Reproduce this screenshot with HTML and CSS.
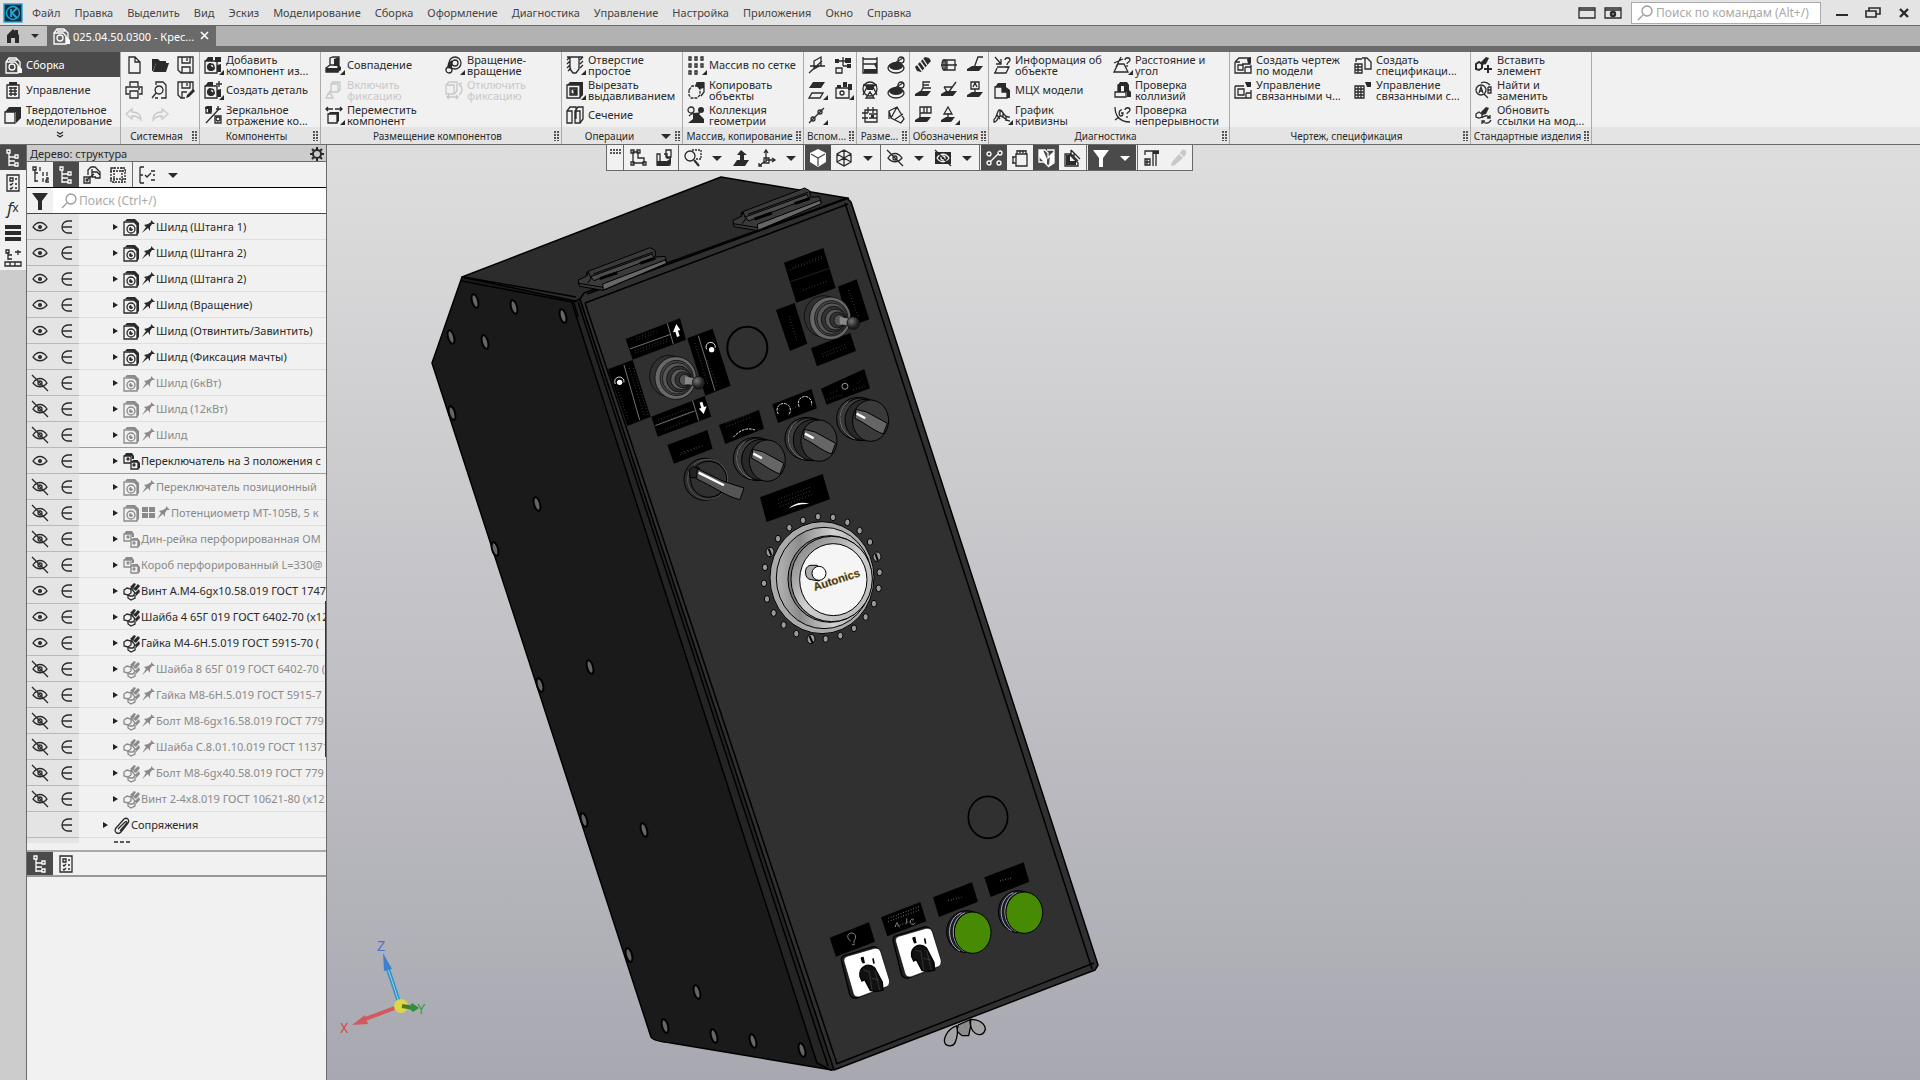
FILE: index.html
```html
<!DOCTYPE html>
<html lang="ru">
<head>
    <meta charset="UTF-8">
    <meta name="viewport" content="width=device-width, initial-scale=1.0">
    <title>025.04.50.0300 - Крес...</title>
    <link rel="stylesheet" href="styles.css">
</head>
<body>
    <!-- Shared icons, 18x18 -->
    <svg class="defs" aria-hidden="true">
        <defs>
            <path id="tri" class="f" d="M20 14v5h-5z"/>
            <g id="asm"><path d="M2 6l3-4h7l4 4v8M2 6h9l3 3v8H2zM5 4h8"/><circle cx="8" cy="11" r="3"/><path class="f" d="M14 9l4 4v4h-4z"/></g>
            <g id="sheet"><path d="M3 4h12v13H3z"/><path class="f" d="M5 1h8v3H5z"/><path d="M5 7h8M5 10h8M5 13h8M7 6v9M11 6v9"/></g>
            <g id="solid"><path d="M1 6h10v11H1z"/><path class="f" d="M1 6l4-5h12v11l-5 5V6z"/></g>
            <path id="new" d="M4 1h6l5 5v11H4zM10 1v5h5"/>
            <g id="open"><path class="f" d="M1 3h6l2 2h6v2H5l-3 8H1z"/><path class="f" d="M5 7h13l-3 9H2z"/></g>
            <path id="save" d="M1 1h15v16H4l-3-3zM5 1v6h8V1M10 2v3M5 17v-6h8v6"/>
            <path id="print" d="M5 5V1h8v4M4 13H1V6h16v7h-3M5 10h8v7H5zM13 8h2"/>
            <path id="preview" d="M5 4V1h7l3 3v13h-5M7 17H4M8 5a4 4 0 1 0 .1 0M5 12l-4 5"/>
            <g id="saveas"><path d="M8 17H4l-3-3V1h15v8M5 1v6h8V1M10 2v3M5 17v-6h5"/><path class="f" d="M10 14l6-6 2 2-6 6-3 1z"/></g>
            <path id="undo" d="M1 8l6-5v3c6 0 9 3 9 8-2-3-5-4-9-4v3z"/>
            <path id="redo" d="M17 8l-6-5v3c-6 0-9 3-9 8 2-3 5-4 9-4v3z"/>
            <g id="addpart"><path d="M1 5h12v12H1z"/><path class="f" d="M1 5l3-4h5v4zM11 1h6v5h-6zM13 9l4-1v8h-4z"/><circle cx="7" cy="11" r="3"/><path class="f" d="M7 7a4 4 0 1 0 4 4 3 3 0 0 1-4-4z"/><use href="#tri"/></g>
            <g id="mkpart"><path d="M1 5h12v12H1zM15 0v6M12 3h6"/><path class="f" d="M1 5l3-4h5v4zM13 9l4-1v8h-4z"/><circle cx="7" cy="11" r="3"/><path class="f" d="M7 7a4 4 0 1 0 4 4 3 3 0 0 1-4-4z"/><use href="#tri"/></g>
            <g id="mirror"><path d="M2 2h5v5H2zM2 17L15 3M11 10h6v7h-6zM14 0v5M12 3h5"/><path class="f" d="M1 1l2-1h5v5l-1 2H4V3H1z"/><circle cx="14" cy="13" r="2"/></g>
            <g id="mate"><path d="M5 9V2l3-1h6v9M1 16v-4l4-3h8v7z"/><path class="f" d="M9 3l5-2v9H9zM1 12h12v4H1z"/><path class="f" d="M13 9l3 2v3l-3 2z"/><use href="#tri"/></g>
            <g id="fixon"><path d="M6 3l2-2h7v8l-2 2H6zM6 3h7v8M6 9l-3 4M1 17l2-4h3l2 4z"/></g>
            <g id="move"><path d="M1 3h7M10 3h7M3 1L1 3l2 2M15 1l2 2-2 2M3 8h9v9H3z"/><path class="f" d="M3 8l2-2h9v9l-2 2V8z"/><use href="#tri"/></g>
            <g id="rot"><circle cx="10" cy="7" r="6"/><circle cx="10" cy="7" r="3"/><circle cx="4" cy="14" r="3"/><path class="f" d="M3 7l4-3v9l-5-1z"/><use href="#tri"/></g>
            <g id="fixoff"><path d="M1 4l3-3h8v9l-3 3H1zM1 4h8v9M14 3c4 3 4 8 0 11M17 2l-3 1 2 3M2 16h11M4 14l-2 2 2 2M11 14l2 2-2 2"/></g>
            <g id="hole"><path d="M4 1v12l3 4h3l3-4V1M1 1h16M1 4l3-3M1 8l3-3M1 12l3-3M2 15l3-3M14 4l3-3M14 8l3-3M14 12l3-3"/><use href="#tri"/></g>
            <g id="cut"><path d="M1 4h13v13H1zM5 8h5v5H5z"/><path class="f" d="M1 4l3-3h13v13l-3 3V4zM7 9h4v4H8z"/><path d="M4 7h7v7H4z"/><use href="#tri"/></g>
            <g id="section"><path d="M1 5l3-4h6v12M1 5h5v12H1zM9 5l3-4h5v12l-3 4M9 5h5v12H9z"/></g>
            <g id="grid"><path d="M2 1h2v3H2zM8 1h2v3H8zM14 1h2v3h-2zM2 8h2v3H2zM8 8h2v3H8zM14 8h2v3h-2zM2 15h2v3H2zM8 15h2v3H8z"/><use href="#tri"/></g>
            <g id="copy"><path d="M9 2h8v9l-3 4" /><path class="f" d="M8 4l3-3h6v6l-4 1z"/><path stroke-dasharray="3 1" d="M2 9l3-4h5l3 3v6l-3 3H4l-2-3z"/></g>
            <g id="collect"><circle cx="4" cy="4" r="3"/><circle class="f" cx="14" cy="4" r="3"/><path class="f" d="M6 8h6l5 5v4H1l5-4z"/><path d="M2 10c3-4 7-2 11-3"/></g>
            <path id="plane" d="M6 5l7-4v8l-7 4zM1 17L14 5M2 10h15M6 13V5"/>
            <g id="tree3"><path d="M9 1v9M4 5h10M9 10h7M2 12h6v5H2z"/><path class="f" d="M1 3h4v4H1zM11 2h6v5h-6zM13 8h4v4h-4z"/></g>
            <g id="planes"><path class="f" d="M5 1h12l-4 6H1z"/><path d="M4 12h11l-3 5H1z"/><use href="#tri"/></g>
            <g id="cam"><path d="M2 7h13v10H2z"/><circle cx="8" cy="12" r="2"/><path class="f" d="M9 1h4v5H9zM14 3h4v6h-4zM3 4h4v3H3z"/><use href="#tri"/></g>
            <g id="axis"><path d="M1 17L16 2"/><circle cx="5" cy="13" r="2"/><circle cx="12" cy="6" r="2"/><use href="#tri"/></g>
            <g id="dimlin"><path d="M2 1v16M16 1v8M2 3h14M2 8h14v9H2z"/><path class="f" d="M3 13h13v4H3zM13 8l3-2v8z"/></g>
            <g id="dimdia"><ellipse cx="9" cy="12" rx="8" ry="5"/><ellipse class="f" cx="9" cy="10" rx="7" ry="4"/><path d="M6 8l10-6"/><circle cx="14" cy="4" r="3"/></g>
            <g id="dimang"><path d="M2 14L7 4h4l5 10M2 4h14M5 17l4-6 4 6z"/><circle cx="9" cy="8" r="7"/><path class="f" d="M4 4h10l-2 5H6z"/></g>
            <g id="dimgrid"><path d="M4 4h12v12H4zM7 1v6M12 1v6M1 7h6M1 12h6M8 8h8M8 12h8"/><path class="f" d="M10 9h3v3h-3z"/></g>
            <g id="dimfree"><path d="M2 5l8-4 7 12-3 4L4 12zM2 5v8M10 1L4 12M7 14l9-6"/></g>
            <g id="thread"><path class="f" d="M1 11L11 1l4 1 2 3L7 16l-4-1z"/><path stroke="#f1f1f1" d="M6 5l5 7M9 3l4 6M3 8l5 7"/></g>
            <g id="axle"><path d="M1 9h16M4 4h3v10H4zM7 4h8v10H7z"/><ellipse cx="4" cy="9" rx="2" ry="5"/></g>
            <g id="base1"><path class="f" d="M1 13l5-3h11l-4 5H1z"/><path d="M8 12L12 1h5"/></g>
            <g id="base2"><path class="f" d="M1 13l5-3h11l-4 5H1z"/><path d="M6 12l3-5h8M9 7V1h7M9 4h6"/></g>
            <g id="base3"><path class="f" d="M1 13l5-3h11l-4 5H1z"/><path d="M4 6l4 6 8-11M4 6h8"/></g>
            <g id="base4"><path class="f" d="M1 14l5-3h11l-4 5H1z"/><path d="M9 12V8M5 1h8v7H5zM7 6l2-4 2 4"/></g>
            <g id="base5"><path class="f" d="M1 14l5-3h11l-4 5H1z"/><path d="M6 12V1h11v6H6M10 1v6M13 1v6"/></g>
            <g id="base6"><path class="f" d="M1 14l5-3h9l-4 5H1z"/><path d="M8 12V7M8 1l-4 7h8z"/><use href="#tri"/></g>
            <g id="info"><path d="M2 1l6 7M8 3v5H3M4 11h12l-3 6H1M2 17l2-5M12 4c0-3 5-3 5 0 0 2-3 2-3 5M14 10v2"/></g>
            <g id="mass"><path d="M2 6h7v5h5v6H2z"/><path class="f" d="M2 6l3-4h8v4l4 3v8h-3v-6H9V6z"/></g>
            <g id="curv"><path d="M1 13c3 0 3-10 6-9 4 1 3 8 10 7M1 13v3c4 0 4-7 7-6 3 0 4 5 9 5M4 9l3 4M7 4v7M10 7v5M13 10v5"/><use href="#tri"/></g>
            <g id="dist"><path d="M1 7l9-4M8 1L3 11M5 8h6l4 8H1zM12 4c0-3 5-3 5 0 0 2-3 2-3 4M14 9v2"/><use href="#tri"/></g>
            <g id="coll"><path d="M2 11h11v5H2zM5 11V4h7v7"/><path class="f" d="M5 4l2-3h7l2 3v5l2 2v5h-4v-5h-3V5H8v6H5z"/></g>
            <g id="cont"><path d="M2 1c0 8 4 15 15 15M6 11l-4 3M9 4c-3-1-4 6-1 6 2 0 2-2 2-3H8M12 4c0-3 5-3 5 0 0 2-3 2-3 4M14 10v2"/></g>
            <g id="draw"><path d="M1 6h5M1 6v11h16V9M4 9h5v5H4zM11 11h6M11 11v6M8 2h8v6H8M1 6l4-4h3"/><path class="f" d="M13 3l4-2v6l-3 1z"/></g>
            <g id="drawm"><path d="M1 5h9M1 5v12h16V9M4 8h6v6H4zM12 12h5M12 12v5"/><path class="f" d="M11 1h6v5h-4z"/></g>
            <g id="spec"><path d="M1 8h7v9H1zM1 11h7M1 14h7M4 8v9M8 2h5l4 4v7h-6V2M2 6V3h6"/></g>
            <g id="specm"><path class="f" d="M11 1h6v5h-4z"/><path d="M1 5h9v12H1zM1 8h9M1 11h9M1 14h9M4 5v12M7 5v12"/></g>
            <g id="bolt"><path class="f" d="M7 5l4-4 2 1-3 5zM10 7l5-5 2 2-4 5zM12 11l4-4 1 3-4 4z"/><path d="M8 6l4 5-2 3H7l-2-1M1 8l3-2 4 1v4l-3 2-4-1z"/><path d="M5 13v3l3 2 4-2v-3"/></g>
            <g id="insert"><path class="f" d="M6 6l5-5 3 1-3 6-4 1z"/><path d="M1 8l3-2 3 2v4l-3 2-3-1zM9 13h8M13 9v8" stroke-width="2"/></g>
            <g id="findab"><circle cx="6" cy="9" r="5"/><path d="M4 12l2-6 2 6M5 10h3M9 13l4 4M13 6v6h3v-3h-3M13 6h3v3M6 2c4-2 7 0 9 2"/></g>
            <g id="refresh"><path class="f" d="M6 6l5-5 3 1-3 6-4 1z"/><path d="M1 8l3-2 3 2v3l-3 1-3-1zM7 12c2-3 6-3 8 0M16 14c-2 4-7 4-9 1M15 9v3h-3M7 18v-3h3"/></g>
            <g id="tree"><path d="M5 4v13M5 8h6M5 16h6"/><path d="M3 1h3v3H3zM11 6h3v3h-3zM11 14h3v3h-3zM5 12h6"/></g>
            <g id="props"><path d="M3 1h12v16H3zM6 4h3v3H6zM11 5h2M6 10l1 1 2-2M11 10h2M6 14l1 1 2-2M11 14h2"/></g>
            <g id="lines"><path class="f" d="M1 1h16v4H1zM1 7h16v4H1zM1 13h16v4H1z"/></g>
            <g id="treeplus"><path d="M4 3v8M4 6h4M4 10h4M2 1h3v3H2zM14 1v5M11 3h6M1 13h16v4H1zM6 13v4M11 13v4"/></g>
            <g id="num"><path d="M4 3v13M4 7h3M4 15h3M2 1h3v3H2zM9 1v4M12 6v4M16 6v4M12 12v4M15 12h2v2h-2v2h3"/></g>
            <g id="link"><path d="M1 11h6v6H1zM5 9V4l3-3h4l5 5v6h-5M9 3v8h4M9 6h5l3 3"/><circle cx="4" cy="14" r="1"/><path d="M5 13l6-5"/></g>
            <path id="dash" stroke-dasharray="2 1" d="M5 1v16M1 5h16M13 1v16M1 13h16M2 2h14v14H2z"/>
            <path id="checks" d="M2 1v16M2 1h4M2 9h3M2 17h4M7 9l2 2 4-4M13 5h4M15 9h2M13 14h4"/>
            <path id="funnel" class="f" d="M1 1h16l-6 8v9H7V9z"/>
            <g id="mag"><circle cx="11" cy="7" r="5"/><path d="M7 11l-5 5"/></g>
            <g id="eye"><path d="M2 9c4-6 10-6 14 0-4 5-10 5-14 0z"/><circle class="f" cx="9" cy="9" r="2"/></g>
            <g id="eyeoff"><path d="M2 9c4-6 10-6 14 0-4 5-10 5-14 0zM1 1l16 16"/><circle cx="9" cy="9" r="2"/></g>
            <path id="in" d="M15 3h-4a6 6 0 0 0 0 12h4M5 9h10"/>
            <path id="arr" class="f" d="M1 6l5 3-5 3z"/>
            <g id="part"><path d="M1 4h10l3 3v10H1z"/><path class="f" d="M2 3l2-2h8l4 4v10l-2 2V7l-3-3z"/><circle cx="8" cy="11" r="4"/><path class="f" d="M8 9a2 2 0 1 0 2 2 2 2 0 0 1-2-2z"/></g>
            <g id="subasm"><path d="M1 4h7v7H1zM8 10h7v7H8z"/><path class="f" d="M1 4l2-3h6l2 3v3H9V4zM15 9l2 2v5l-2 1zM8 10l2-2h5v2z"/><circle cx="5" cy="7" r="1"/><circle cx="11" cy="13" r="1"/></g>
            <path id="pin" class="f" d="M0 15l4-6-2-2 4-1 3-2V2l4 4h-3l-2 3v4l-2-3z"/>
            <path id="four" class="f" d="M0 3h6v5H0zM7 3h6v5H7zM0 9h6v5H0zM7 9h6v5H7z"/>
            <path id="clip" d="M3 12L11 3c3-2 6 1 4 4L8 16c-3 3-8 0-5-4zM5 13l7-7c2-1 2 1 1 2l-6 7"/>
            <g id="gear"><circle cx="9" cy="9" r="4" stroke-width="2"/><path stroke-width="2" d="M9 2v3M9 13v3M2 9h3M13 9h3M4 4l2 2M12 12l2 2M14 4l-2 2M6 12l-2 2"/></g>
            <path id="caret" class="f" d="M4 7h10l-5 5z"/>
            <path id="sketch" d="M4 3v11h11v-5h-6V3zM2 1h3v3H2zM8 1h3v3H8zM2 13h3v3H2zM14 13h3v3h-3z"/>
            <g id="sk2"><path d="M2 5h3v8h10v3H2zM9 5h3v4h4M11 1h5v7h-5z"/><path class="f" d="M2 12h10l4-3v5l-3 3H2z"/></g>
            <g id="zoomw"><circle cx="6" cy="7" r="5"/><path d="M10 11l5 6" stroke-width="2"/><path stroke-dasharray="2 1" d="M8 1h9v9h-5"/></g>
            <path id="norm" class="f" d="M5 11l-4 6h12l4-6h-5V6h3L9 1 5 6h3v7h2v-2z"/>
            <path id="csys" d="M8 13V1M6 4l2-3 2 3M8 11h9M14 9l3 2-3 2M7 12l-6 5M1 14v3h3M6 9h5v5H6z"/>
            <g id="cubef"><path class="f" d="M9 0l8 4v9l-8 5-8-5V4z"/><path stroke="#4a4a4a" d="M2 5l7 4 7-4M9 9v8"/></g>
            <path id="cubew" d="M9 1l7 4v8l-7 4-7-4V5zM2 5l7 4 7-4M9 9v8M9 1v8M2 13l7-4 7 4"/>
            <g id="eyebox"><path class="f" d="M1 3h16v12H1z"/><path stroke="#f1f1f1" d="M3 9c3-5 9-5 12 0-3 5-9 5-12 0z"/><circle cx="9" cy="9" r="2" stroke="#f1f1f1"/><path d="M1 1l16 16"/></g>
            <g id="pts"><path d="M5 13L13 5"/><circle cx="4" cy="5" r="2"/><circle cx="14" cy="14" r="2"/><circle cx="4" cy="14" r="2"/><circle cx="15" cy="4" r="2"/></g>
            <path id="dims" d="M5 5h11v12H5zM1 8h4M1 14h4M2 8v6M6 1v4M15 1v4M6 2h9M9 1v3M12 1v3"/>
            <g id="bodies"><path d="M2 1h6l3 3v5l5-5v9l-5 4-4-4H2z"/><path class="f" d="M2 1h4l4 9v6l-3-3-5-5zM13 6l4-3v10l-5 4z"/><path d="M10 1h7v13l-6 4"/></g>
            <g id="sect2"><path d="M2 17V5h4l9 9v3zM8 1l9 9M7 4l8 8M8 1v4M11 4v4"/><path class="f" d="M3 6h4v6h6v4H3z"/></g>
            <g id="crane"><path d="M2 6V2h14M13 2v15M10 2v15M2 10h5v6H2zM2 13h5M4 10v6"/><path class="f" d="M10 2h6v3h-6z"/></g>
            <path id="pick" class="f" d="M2 17l1-4 7-8 4 4-8 7zM11 4l2-3c3-1 5 1 4 4l-2 3z"/>
        </defs>
    </svg>

    <!-- Menu bar -->
    <header class="menubar">
        <svg class="logo" viewBox="0 0 20 20"><rect x="1" y="1" width="18" height="18" fill="#0d2b3e" stroke="#1fa9d8" stroke-width="1.4"/><circle cx="10" cy="10" r="6.5" fill="none" stroke="#1fa9d8" stroke-width="1.4"/><path d="M8 6v8M9 10l5-5M9 10l5 5" fill="none" stroke="#1fa9d8" stroke-width="1.8"/></svg>
        <nav>
            <a href="#">Файл</a><a href="#">Правка</a><a href="#">Выделить</a><a href="#">Вид</a><a href="#">Эскиз</a><a href="#">Моделирование</a><a href="#">Сборка</a><a href="#">Оформление</a><a href="#">Диагностика</a><a href="#">Управление</a><a href="#">Настройка</a><a href="#">Приложения</a><a href="#">Окно</a><a href="#">Справка</a>
        </nav>
        <div class="winbtns">
            <button aria-label="Экран"><svg class="i"><path d="M1 4h16v10H1zM1 6h16"/></svg></button>
            <button aria-label="Параметры экрана"><svg class="i"><path d="M1 4h16v10H1zM1 6h16"/><circle cx="9" cy="10" r="2" stroke-width="2.4"/></svg></button>
        </div>
        <label class="cmdsearch"><svg class="i"><use href="#mag"/></svg><input type="text" placeholder="Поиск по командам (Alt+/)" aria-label="Поиск по командам"></label>
        <div class="wincontrols">
            <button aria-label="Свернуть"><svg class="i"><path d="M3 11h12" stroke-width="2"/></svg></button>
            <button aria-label="Развернуть"><svg class="i"><path d="M2 7h10v6H2zM5 7V4h11v6h-4M5 4h11" stroke-width="1.6"/></svg></button>
            <button aria-label="Закрыть"><svg class="i"><path d="M5 5l8 8M13 5l-8 8" stroke-width="2.4"/></svg></button>
        </div>
    </header>

    <!-- Document tabs -->
    <div class="tabs">
        <button class="home" aria-label="Главная"><svg class="i"><path class="f" d="M3 16V8l6-6 2 2V3h3v4l1 1v8h-4v-5H7v5z"/></svg><svg class="i"><path class="f" d="M4 7h8l-4 4z"/></svg></button>
        <div class="tab"><svg class="i"><use href="#asm"/></svg><span>025.04.50.0300 - Крес...</span><button aria-label="Закрыть документ"><svg class="i"><path d="M5 5l7 7M12 5l-7 7" stroke-width="1.6"/></svg></button></div>
    </div>

    <!-- Ribbon -->
    <div class="ribbon">
        <section class="group modes">
            <div class="cmds">
                <button class="cmd active"><svg class="i"><use href="#asm"/></svg><span>Сборка</span></button>
                <button class="cmd"><svg class="i"><use href="#sheet"/></svg><span>Управление</span></button>
                <button class="cmd"><svg class="i"><use href="#solid"/></svg><span>Твердотельное<br>моделирование</span></button>
            </div>
            <footer><svg class="i"><path d="M6 5l3 2 3-2M6 8l3 2 3-2"/></svg></footer>
        </section>
        <section class="group c3">
            <div class="small">
                <button aria-label="Создать"><svg class="i"><use href="#new"/></svg></button>
                <button aria-label="Открыть"><svg class="i"><use href="#open"/></svg></button>
                <button aria-label="Сохранить"><svg class="i"><use href="#save"/></svg></button>
                <button aria-label="Печать"><svg class="i"><use href="#print"/></svg></button>
                <button aria-label="Предпросмотр"><svg class="i"><use href="#preview"/></svg></button>
                <button aria-label="Сохранить как"><svg class="i"><use href="#saveas"/></svg></button>
                <button aria-label="Отменить" disabled><svg class="i"><use href="#undo"/></svg></button>
                <button aria-label="Повторить" disabled><svg class="i"><use href="#redo"/></svg></button>
            </div>
            <footer><span>Системная</span><i class="grip"></i></footer>
        </section>
        <section class="group">
            <div class="cmds">
                <button class="cmd"><svg class="i"><use href="#addpart"/></svg><span>Добавить<br>компонент из...</span></button>
                <button class="cmd"><svg class="i"><use href="#mkpart"/></svg><span>Создать деталь</span></button>
                <button class="cmd"><svg class="i"><use href="#mirror"/></svg><span>Зеркальное<br>отражение ко...</span></button>
            </div>
            <footer><span>Компоненты</span><i class="grip"></i></footer>
        </section>
        <section class="group wide">
            <div class="cmds">
                <button class="cmd"><svg class="i"><use href="#mate"/></svg><span>Совпадение</span></button>
                <button class="cmd" disabled><svg class="i"><use href="#fixon"/></svg><span>Включить<br>фиксацию</span></button>
                <button class="cmd"><svg class="i"><use href="#move"/></svg><span>Переместить<br>компонент</span></button>
                <button class="cmd"><svg class="i"><use href="#rot"/></svg><span>Вращение-<br>вращение</span></button>
                <button class="cmd" disabled><svg class="i"><use href="#fixoff"/></svg><span>Отключить<br>фиксацию</span></button>
            </div>
            <footer><span>Размещение компонентов</span><i class="grip"></i></footer>
        </section>
        <section class="group">
            <div class="cmds">
                <button class="cmd"><svg class="i"><use href="#hole"/></svg><span>Отверстие<br>простое</span></button>
                <button class="cmd"><svg class="i"><use href="#cut"/></svg><span>Вырезать<br>выдавливанием</span></button>
                <button class="cmd"><svg class="i"><use href="#section"/></svg><span>Сечение</span></button>
            </div>
            <footer><span>Операции</span><svg class="i"><use href="#caret"/></svg><i class="grip"></i></footer>
        </section>
        <section class="group">
            <div class="cmds">
                <button class="cmd"><svg class="i"><use href="#grid"/></svg><span>Массив по сетке</span></button>
                <button class="cmd"><svg class="i"><use href="#copy"/></svg><span>Копировать<br>объекты</span></button>
                <button class="cmd"><svg class="i"><use href="#collect"/></svg><span>Коллекция<br>геометрии</span></button>
            </div>
            <footer><span>Массив, копирование</span><i class="grip"></i></footer>
        </section>
        <section class="group c2">
            <div class="small">
                <button aria-label="Плоскость"><svg class="i"><use href="#plane"/></svg></button>
                <button aria-label="Структура"><svg class="i"><use href="#tree3"/></svg></button>
                <button aria-label="Смещённая плоскость"><svg class="i"><use href="#planes"/></svg></button>
                <button aria-label="Сборочный чертёж"><svg class="i"><use href="#cam"/></svg></button>
                <button aria-label="Ось"><svg class="i"><use href="#axis"/></svg></button>
            </div>
            <footer><span>Вспом...</span><i class="grip"></i></footer>
        </section>
        <section class="group c2">
            <div class="small">
                <button aria-label="Линейный размер"><svg class="i"><use href="#dimlin"/></svg></button>
                <button aria-label="Диаметр"><svg class="i"><use href="#dimdia"/></svg></button>
                <button aria-label="Угловой размер"><svg class="i"><use href="#dimang"/></svg></button>
                <button aria-label="Радиус"><svg class="i"><use href="#dimdia"/></svg></button>
                <button aria-label="Сетка размеров"><svg class="i"><use href="#dimgrid"/></svg></button>
                <button aria-label="Свободный размер"><svg class="i"><use href="#dimfree"/></svg></button>
            </div>
            <footer><span>Разме...</span><i class="grip"></i></footer>
        </section>
        <section class="group c3">
            <div class="small">
                <button aria-label="Резьба"><svg class="i"><use href="#thread"/></svg></button>
                <button aria-label="Осевая"><svg class="i"><use href="#axle"/></svg></button>
                <button aria-label="Выноска"><svg class="i"><use href="#base1"/></svg></button>
                <button aria-label="Марка"><svg class="i"><use href="#base2"/></svg></button>
                <button aria-label="Шероховатость"><svg class="i"><use href="#base3"/></svg></button>
                <button aria-label="База"><svg class="i"><use href="#base4"/></svg></button>
                <button aria-label="Допуск формы"><svg class="i"><use href="#base5"/></svg></button>
                <button aria-label="Позиция"><svg class="i"><use href="#base6"/></svg></button>
            </div>
            <footer><span>Обозначения</span><i class="grip"></i></footer>
        </section>
        <section class="group wide">
            <div class="cmds">
                <button class="cmd"><svg class="i"><use href="#info"/></svg><span>Информация об<br>объекте</span></button>
                <button class="cmd"><svg class="i"><use href="#mass"/></svg><span>МЦХ модели</span></button>
                <button class="cmd"><svg class="i"><use href="#curv"/></svg><span>График<br>кривизны</span></button>
                <button class="cmd"><svg class="i"><use href="#dist"/></svg><span>Расстояние и<br>угол</span></button>
                <button class="cmd"><svg class="i"><use href="#coll"/></svg><span>Проверка<br>коллизий</span></button>
                <button class="cmd"><svg class="i"><use href="#cont"/></svg><span>Проверка<br>непрерывности</span></button>
            </div>
            <footer><span>Диагностика</span><i class="grip"></i></footer>
        </section>
        <section class="group wide">
            <div class="cmds two">
                <button class="cmd"><svg class="i"><use href="#draw"/></svg><span>Создать чертеж<br>по модели</span></button>
                <button class="cmd"><svg class="i"><use href="#drawm"/></svg><span>Управление<br>связанными ч...</span></button>
                <button class="cmd"><svg class="i"><use href="#spec"/></svg><span>Создать<br>спецификаци...</span></button>
                <button class="cmd"><svg class="i"><use href="#specm"/></svg><span>Управление<br>связанными с...</span></button>
            </div>
            <footer><span>Чертеж, спецификация</span><i class="grip"></i></footer>
        </section>
        <section class="group">
            <div class="cmds">
                <button class="cmd"><svg class="i"><use href="#insert"/></svg><span>Вставить<br>элемент</span></button>
                <button class="cmd"><svg class="i"><use href="#findab"/></svg><span>Найти и<br>заменить</span></button>
                <button class="cmd"><svg class="i"><use href="#refresh"/></svg><span>Обновить<br>ссылки на мод...</span></button>
            </div>
            <footer><span>Стандартные изделия</span><i class="grip"></i></footer>
        </section>
        <section class="group rest"><footer></footer></section>
    </div>

    <main>
        <!-- Side rail -->
        <nav class="rail">
            <button class="active" aria-label="Дерево"><svg class="i"><use href="#tree"/></svg></button>
            <button aria-label="Параметры"><svg class="i"><use href="#props"/></svg></button>
            <button class="fx" aria-label="Переменные">f<sub>x</sub></button>
            <button aria-label="Слои"><svg class="i"><use href="#lines"/></svg></button>
            <button aria-label="Зоны"><svg class="i"><use href="#treeplus"/></svg></button>
        </nav>

        <!-- Model tree -->
        <aside class="panel">
            <div class="title"><span>Дерево: структура</span><button aria-label="Настройка панели"><svg class="i"><use href="#gear"/></svg></button></div>
            <div class="treebar">
                <button aria-label="Нумерация"><svg class="i"><use href="#num"/></svg></button>
                <button class="active" aria-label="Структура"><svg class="i"><use href="#tree"/></svg></button>
                <button aria-label="Связи"><svg class="i"><use href="#link"/></svg></button>
                <button aria-label="Область"><svg class="i"><use href="#dash"/></svg></button>
                <button class="split" aria-label="Состав"><svg class="i"><use href="#checks"/></svg></button>
                <button aria-label="Ещё"><svg class="i"><use href="#caret"/></svg></button>
            </div>
            <div class="find">
                <button aria-label="Фильтр"><svg class="i"><use href="#funnel"/></svg></button>
                <label><svg class="i"><use href="#mag"/></svg><input type="text" placeholder="Поиск (Ctrl+/)" aria-label="Поиск"></label>
            </div>
            <div class="treewrap">
            <ul class="list">
                <li><button aria-label="Скрыть"><svg class="i"><use href="#eye"/></svg></button><button aria-label="Исключить"><svg class="i"><use href="#in"/></svg></button><div><svg class="i arr"><use href="#arr"/></svg><svg class="i"><use href="#part"/></svg><svg class="i pin"><use href="#pin"/></svg>Шилд (Штанга 1)</div></li>
                <li><button aria-label="Скрыть"><svg class="i"><use href="#eye"/></svg></button><button aria-label="Исключить"><svg class="i"><use href="#in"/></svg></button><div><svg class="i arr"><use href="#arr"/></svg><svg class="i"><use href="#part"/></svg><svg class="i pin"><use href="#pin"/></svg>Шилд (Штанга 2)</div></li>
                <li><button aria-label="Скрыть"><svg class="i"><use href="#eye"/></svg></button><button aria-label="Исключить"><svg class="i"><use href="#in"/></svg></button><div><svg class="i arr"><use href="#arr"/></svg><svg class="i"><use href="#part"/></svg><svg class="i pin"><use href="#pin"/></svg>Шилд (Штанга 2)</div></li>
                <li><button aria-label="Скрыть"><svg class="i"><use href="#eye"/></svg></button><button aria-label="Исключить"><svg class="i"><use href="#in"/></svg></button><div><svg class="i arr"><use href="#arr"/></svg><svg class="i"><use href="#part"/></svg><svg class="i pin"><use href="#pin"/></svg>Шилд (Вращение)</div></li>
                <li><button aria-label="Скрыть"><svg class="i"><use href="#eye"/></svg></button><button aria-label="Исключить"><svg class="i"><use href="#in"/></svg></button><div><svg class="i arr"><use href="#arr"/></svg><svg class="i"><use href="#part"/></svg><svg class="i pin"><use href="#pin"/></svg>Шилд (Отвинтить/Завинтить)</div></li>
                <li><button aria-label="Скрыть"><svg class="i"><use href="#eye"/></svg></button><button aria-label="Исключить"><svg class="i"><use href="#in"/></svg></button><div><svg class="i arr"><use href="#arr"/></svg><svg class="i"><use href="#part"/></svg><svg class="i pin"><use href="#pin"/></svg>Шилд (Фиксация мачты)</div></li>
                <li class="off"><button aria-label="Показать"><svg class="i"><use href="#eyeoff"/></svg></button><button aria-label="Исключить"><svg class="i"><use href="#in"/></svg></button><div><svg class="i arr"><use href="#arr"/></svg><svg class="i"><use href="#part"/></svg><svg class="i pin"><use href="#pin"/></svg>Шилд (6кВт)</div></li>
                <li class="off"><button aria-label="Показать"><svg class="i"><use href="#eyeoff"/></svg></button><button aria-label="Исключить"><svg class="i"><use href="#in"/></svg></button><div><svg class="i arr"><use href="#arr"/></svg><svg class="i"><use href="#part"/></svg><svg class="i pin"><use href="#pin"/></svg>Шилд (12кВт)</div></li>
                <li class="off"><button aria-label="Показать"><svg class="i"><use href="#eyeoff"/></svg></button><button aria-label="Исключить"><svg class="i"><use href="#in"/></svg></button><div><svg class="i arr"><use href="#arr"/></svg><svg class="i"><use href="#part"/></svg><svg class="i pin"><use href="#pin"/></svg>Шилд</div></li>
                <li class="current"><button aria-label="Скрыть"><svg class="i"><use href="#eye"/></svg></button><button aria-label="Исключить"><svg class="i"><use href="#in"/></svg></button><div><svg class="i arr"><use href="#arr"/></svg><svg class="i"><use href="#subasm"/></svg>Переключатель на 3 положения с</div></li>
                <li class="off"><button aria-label="Показать"><svg class="i"><use href="#eyeoff"/></svg></button><button aria-label="Исключить"><svg class="i"><use href="#in"/></svg></button><div><svg class="i arr"><use href="#arr"/></svg><svg class="i"><use href="#part"/></svg><svg class="i pin"><use href="#pin"/></svg>Переключатель позиционный</div></li>
                <li class="off"><button aria-label="Показать"><svg class="i"><use href="#eyeoff"/></svg></button><button aria-label="Исключить"><svg class="i"><use href="#in"/></svg></button><div><svg class="i arr"><use href="#arr"/></svg><svg class="i"><use href="#part"/></svg><svg class="i pin"><use href="#four"/></svg><svg class="i pin"><use href="#pin"/></svg>Потенциометр МТ-105В, 5 к</div></li>
                <li class="off"><button aria-label="Показать"><svg class="i"><use href="#eyeoff"/></svg></button><button aria-label="Исключить"><svg class="i"><use href="#in"/></svg></button><div><svg class="i arr"><use href="#arr"/></svg><svg class="i"><use href="#subasm"/></svg>Дин-рейка перфорированная ОМ</div></li>
                <li class="off"><button aria-label="Показать"><svg class="i"><use href="#eyeoff"/></svg></button><button aria-label="Исключить"><svg class="i"><use href="#in"/></svg></button><div><svg class="i arr"><use href="#arr"/></svg><svg class="i"><use href="#subasm"/></svg>Короб перфорированный L=330@</div></li>
                <li><button aria-label="Скрыть"><svg class="i"><use href="#eye"/></svg></button><button aria-label="Исключить"><svg class="i"><use href="#in"/></svg></button><div><svg class="i arr"><use href="#arr"/></svg><svg class="i"><use href="#bolt"/></svg>Винт А.М4-6gx10.58.019 ГОСТ 1747</div></li>
                <li><button aria-label="Скрыть"><svg class="i"><use href="#eye"/></svg></button><button aria-label="Исключить"><svg class="i"><use href="#in"/></svg></button><div><svg class="i arr"><use href="#arr"/></svg><svg class="i"><use href="#bolt"/></svg>Шайба 4 65Г 019 ГОСТ 6402-70 (x12</div></li>
                <li><button aria-label="Скрыть"><svg class="i"><use href="#eye"/></svg></button><button aria-label="Исключить"><svg class="i"><use href="#in"/></svg></button><div><svg class="i arr"><use href="#arr"/></svg><svg class="i"><use href="#bolt"/></svg>Гайка М4-6Н.5.019 ГОСТ 5915-70 (</div></li>
                <li class="off"><button aria-label="Показать"><svg class="i"><use href="#eyeoff"/></svg></button><button aria-label="Исключить"><svg class="i"><use href="#in"/></svg></button><div><svg class="i arr"><use href="#arr"/></svg><svg class="i"><use href="#bolt"/></svg><svg class="i pin"><use href="#pin"/></svg>Шайба 8 65Г 019 ГОСТ 6402-70 (</div></li>
                <li class="off"><button aria-label="Показать"><svg class="i"><use href="#eyeoff"/></svg></button><button aria-label="Исключить"><svg class="i"><use href="#in"/></svg></button><div><svg class="i arr"><use href="#arr"/></svg><svg class="i"><use href="#bolt"/></svg><svg class="i pin"><use href="#pin"/></svg>Гайка М8-6Н.5.019 ГОСТ 5915-7</div></li>
                <li class="off"><button aria-label="Показать"><svg class="i"><use href="#eyeoff"/></svg></button><button aria-label="Исключить"><svg class="i"><use href="#in"/></svg></button><div><svg class="i arr"><use href="#arr"/></svg><svg class="i"><use href="#bolt"/></svg><svg class="i pin"><use href="#pin"/></svg>Болт М8-6gx16.58.019 ГОСТ 779</div></li>
                <li class="off"><button aria-label="Показать"><svg class="i"><use href="#eyeoff"/></svg></button><button aria-label="Исключить"><svg class="i"><use href="#in"/></svg></button><div><svg class="i arr"><use href="#arr"/></svg><svg class="i"><use href="#bolt"/></svg><svg class="i pin"><use href="#pin"/></svg>Шайба С.8.01.10.019 ГОСТ 11371</div></li>
                <li class="off"><button aria-label="Показать"><svg class="i"><use href="#eyeoff"/></svg></button><button aria-label="Исключить"><svg class="i"><use href="#in"/></svg></button><div><svg class="i arr"><use href="#arr"/></svg><svg class="i"><use href="#bolt"/></svg><svg class="i pin"><use href="#pin"/></svg>Болт М8-6gx40.58.019 ГОСТ 779</div></li>
                <li class="off"><button aria-label="Показать"><svg class="i"><use href="#eyeoff"/></svg></button><button aria-label="Исключить"><svg class="i"><use href="#in"/></svg></button><div><svg class="i arr"><use href="#arr"/></svg><svg class="i"><use href="#bolt"/></svg>Винт 2-4x8.019 ГОСТ 10621-80 (x12</div></li>
                <li class="parent"><span></span><button aria-label="Исключить"><svg class="i"><use href="#in"/></svg></button><div><svg class="i arr"><use href="#arr"/></svg><svg class="i"><use href="#clip"/></svg>Сопряжения</div></li>
                <li class="parent"><span></span><span></span><div><svg class="i arr"></svg><svg class="i"><path stroke-dasharray="4 2" d="M1 0h16"/></svg></div></li>
            </ul>
            <div class="thumb"></div>
            </div>
            <div class="bottom">
                <button class="active" aria-label="Дерево"><svg class="i"><use href="#tree"/></svg></button>
                <button aria-label="Свойства"><svg class="i"><use href="#props"/></svg></button>
            </div>
            <div class="empty"></div>
        </aside>

        <!-- 3D view -->
        <div class="view">
            <svg class="scene" viewBox="327 145 1593 935" preserveAspectRatio="xMinYMin meet">
                <defs>
                    <linearGradient id="metal"><stop offset="0" stop-color="#b4b4b4"/><stop offset=".25" stop-color="#8c8c8c"/><stop offset=".6" stop-color="#d2d2d2"/><stop offset="1" stop-color="#9a9a9a"/></linearGradient>
                    <linearGradient id="capg" x1="0" y1="0" x2="1" y2="1"><stop offset="0" stop-color="#777"/><stop offset=".5" stop-color="#cfcfcf"/><stop offset="1" stop-color="#b4b4b4"/></linearGradient>
                    <radialGradient id="ball" cx=".35" cy=".35"><stop offset="0" stop-color="#777"/><stop offset="1" stop-color="#222"/></radialGradient>
                    <g id="hinge" stroke="#000" stroke-width="3">
                        <path fill="#3a3a3a" d="M475 360l22-10 5-15 188-72 15 8 2 20 28-2 5 20-190 82-72-12z"/>
                        <path fill="#4c4c4c" d="M512 350l185-68 5 12-180 68z"/>
                        <path fill="#676767" d="M548 372l188-72 4 10-190 80z"/>
                        <path fill="none" d="M475 370l75 12M500 350l5-15 8 20-10 15M520 342l180-66"/>
                        <path stroke-width="9" d="M540 356l52-18M660 310l46-16"/>
                    </g>
                    <g id="stick" stroke="#000" stroke-width="2">
                        <ellipse cx="747" cy="648" rx="58" ry="62" fill="#303030"/>
                        <ellipse cx="767" cy="654" rx="62" ry="64" fill="#686868"/>
                        <ellipse cx="770" cy="654" rx="50" ry="53" fill="#454545"/>
                        <ellipse cx="772" cy="655" rx="45" ry="47" fill="#565656"/>
                        <ellipse cx="777" cy="657" rx="37" ry="39" fill="#333"/>
                        <ellipse cx="782" cy="658" rx="30" ry="31" fill="#5a5a5a"/>
                        <ellipse cx="788" cy="659" rx="23" ry="24" fill="#333"/>
                        <ellipse cx="794" cy="660" rx="16" ry="17" fill="#555"/>
                        <path d="M795 649l35 8v19l-35-4z" fill="#888" stroke="none"/>
                        <circle cx="836" cy="668" r="19" fill="url(#ball)"/>
                    </g>
                    <g id="knob" stroke="#000" stroke-width="3">
                        <ellipse cx="1005" cy="896" rx="65" ry="64" fill="#333"/>
                        <ellipse cx="1014" cy="898" rx="64" ry="64" fill="#3b3b3b"/>
                        <path d="M975 845a64 64 0 0 0 20 112" fill="none" stroke="#777"/>
                        <ellipse cx="1025" cy="900" rx="60" ry="62" fill="#282828"/>
                        <ellipse cx="1042" cy="902" rx="54" ry="62" fill="#3a3a3a"/>
                        <path fill="#666" d="M998 868l32 8 62 34-12 32c-30-10-50-30-85-47z"/>
                        <path stroke="#fff" stroke-width="7" d="M1000 881l26 14"/>
                    </g>
                    <g id="sw" stroke="#000" stroke-width="4">
                        <path fill="#222" d="M185 545q-5-15 10-19l85-26q15 2 20 12l24 85q5 18-8 24l-85 33q-16 3-22-12z"/>
                        <path fill="#fff" stroke-width="2" d="M193 548q-5-14 8-19l82-24q15-2 19 10l26 84q3 16-8 21l-80 30q-15 4-20-9z"/>
                        <path fill="none" stroke-width="5" d="M244 533l4 14M279 535l3 16M243 534l6-1 3 14-5 1"/>
                        <path fill="#111" d="M240 590c-5-30 25-45 45-25l22 42 2 24-22 4-16-4-17-32-8 4z"/>
                        <path fill="none" stroke="#444" stroke-width="2" d="M250 570l18 5 8 55M285 570l14 60M275 595l22 5"/>
                    </g>
                    <g id="lamp" stroke="#000" stroke-width="3">
                        <ellipse cx="560" cy="455" rx="60" ry="63" fill="#1c1c24"/>
                        <path fill="none" stroke="#aab" stroke-width="3" d="M545 398c-45 15-50 90-5 115M555 398c-45 18-48 90-2 117M565 398c-50 18-48 92-2 120"/>
                        <ellipse cx="578" cy="458" rx="55" ry="62" fill="#478b04"/>
                    </g>
                    <ellipse id="bore" rx="3" ry="7" transform="rotate(-16)"/>
                </defs>

                <!-- enclosure -->
                <g stroke="#000" stroke-width="1.5" stroke-linejoin="round">
                    <path fill="#1a1a1a" d="M462 277L432 363l219 674q2 4 20 6l161 27L580 300z"/>
                    <path fill="#2c2c2c" d="M462 277L721 177l126 21-267 104z"/>
                    <path fill="#242424" d="M572 303l8-4 255 770-4 1-14-7z"/>
                    <path fill="#303030" d="M580 299l4-6 263-95 4 4 247 763-3 5-261 100z"/>
                    <path fill="none" d="M462 281l110 21M464 277l112 20M585 303l252 761M578 302l250 764M585 303l263-99M587 294l262-96M845 203l247 766M836 1064l258-101M574 303l4 14"/>
                </g>
                <g fill="#666" stroke="#000" stroke-width="2">
                    <use href="#bore" x="475" y="301"/><use href="#bore" x="514" y="307"/><use href="#bore" x="563" y="316"/><use href="#bore" x="451" y="337"/><use href="#bore" x="485" y="342"/><use href="#bore" x="452" y="413"/><use href="#bore" x="537" y="504"/><use href="#bore" x="495" y="549"/><use href="#bore" x="590" y="667"/><use href="#bore" x="540" y="685"/><use href="#bore" x="584" y="820"/><use href="#bore" x="644" y="830"/><use href="#bore" x="629" y="955"/><use href="#bore" x="697" y="992"/><use href="#bore" x="665" y="1026"/><use href="#bore" x="714" y="1036"/><use href="#bore" x="753" y="1041"/><use href="#bore" x="802" y="1050"/>
                </g>

                <!-- upper controls -->
                <g transform="translate(420 160) scale(.3333)">
                    <use href="#hinge"/>
                    <use href="#hinge" x="464" y="-179"/>
                    <path d="M617 537l163-62 18 64-160 60zM802 535l76-29 54 171-76 30zM564 628l74-28 54 170-70 28zM694 770l160-62 20 62-161 60zM742 855l120-45 16 56-116 45zM897 795l120-45 15 56-116 46zM1057 733l118-46 16 58-117 44zM1203 686l130-59 17 58-130 49zM1092 308l118-44 37 120-118 44zM1254 380l56-22 38 120-60 22zM1068 450l56-21 38 122-52 22zM1173 565l118-46 17 54-117 46zM1020 1012l188-70 22 76-190 68z"/>
                    <path d="M630 567l122-44M742 490l18 62M835 527l50 165M612 615l47 165M706 797l118-44M818 722l18 60" stroke="#aaa" stroke-width="2"/>
                    <path d="M1112 365l116-40" stroke="#333" stroke-width="2"/>
                    <g stroke="#555" stroke-width="3" stroke-dasharray="2 7" fill="none">
                        <path d="M650 540l60-22M650 532l60-22M645 580l95-35M645 572l95-35M825 550l40 130M862 600l30 80M628 625l46 145M640 625l46 145M590 680l35 100M715 780l90-34M720 790l90-34M735 808l70-26M780 885l75-30M785 878l60-22M920 800l70-27M918 790l70-27M1110 330l100-36M1118 322l90-34M1150 390l70-26M1285 390l30 80M1108 470l22 70M1210 590l70-28M1206 582l70-28M1222 720l50-18M1232 700l20-8M1300 690l36-12M1312 670l16-14M1075 1030l100-38M1075 1018l100-38M1080 1040l100-38M1118 745l20-8"/>
                    </g>
                    <g fill="none" stroke="#ddd" stroke-width="3"><path d="M586 672a14 14 0 1 1 26-5M860 568a14 14 0 1 1 26-5"/><path stroke-dasharray="8 3" d="M940 832q30-34 65-22M1075 762a20 20 0 1 1 30 3M1138 740a20 20 0 1 1 36-4"/><circle cx="1275" cy="679" r="9" stroke-width="2"/></g>
                    <path fill="#fff" d="M769 492l12 18-7 2 5 16-8 3-5-16-7 2zM851 762l-14-16 7-2-5-16 8-3 5 16 8-2zM1105 1046q30-26 63-14-35-2-63 14z"/>
                    <circle cx="599" cy="667" r="8" fill="#fff"/><circle cx="875" cy="569" r="8" fill="#fff"/>
                    <ellipse cx="982" cy="563" rx="60" ry="63" fill="#303030" stroke="#000" stroke-width="6"/>
                    <use href="#stick"/>
                    <use href="#stick" x="464" y="-179"/>
                    <use href="#knob"/><use href="#knob" x="155" y="-60"/><use href="#knob" x="310" y="-120"/>
                    <g stroke="#000" stroke-width="3">
                        <circle cx="855" cy="958" r="63" fill="#2d2d2d"/><circle cx="863" cy="958" r="60" fill="none" stroke="#555"/><circle cx="866" cy="958" r="54" fill="#303030"/>
                        <path fill="#222" d="M808 930l10-10 20 4-6 30-22-2z"/>
                        <path fill="#555" d="M832 926l78 38 62 20-12 35c-40-8-80-40-130-62z"/>
                        <path stroke="#fff" stroke-width="7" d="M836 938l76 38"/>
                    </g>
                </g>

                <!-- encoder -->
                <g transform="translate(700 460) scale(.3333)" stroke="#000" stroke-width="3">
                    <g fill="#999">
                        <ellipse cx="354" cy="170" rx="8" ry="10"/><ellipse cx="399" cy="172" rx="8" ry="10"/><ellipse cx="442" cy="187" rx="8" ry="10"/><ellipse cx="479" cy="212" rx="8" ry="10"/><ellipse cx="510" cy="246" rx="8" ry="10"/><ellipse cx="531" cy="290" rx="12" ry="14"/><ellipse cx="539" cy="337" rx="8" ry="10"/><ellipse cx="536" cy="385" rx="8" ry="10"/><ellipse cx="522" cy="431" rx="8" ry="10"/><ellipse cx="497" cy="471" rx="8" ry="10"/><ellipse cx="462" cy="505" rx="8" ry="10"/><ellipse cx="421" cy="527" rx="8" ry="10"/><ellipse cx="377" cy="537" rx="8" ry="10"/><ellipse cx="333" cy="537" rx="12" ry="14"/><ellipse cx="289" cy="521" rx="8" ry="10"/><ellipse cx="251" cy="495" rx="8" ry="10"/><ellipse cx="221" cy="459" rx="8" ry="10"/><ellipse cx="201" cy="417" rx="8" ry="10"/><ellipse cx="192" cy="370" rx="8" ry="10"/><ellipse cx="195" cy="322" rx="8" ry="10"/><ellipse cx="210" cy="276" rx="12" ry="14"/><ellipse cx="234" cy="236" rx="8" ry="10"/><ellipse cx="268" cy="203" rx="8" ry="10"/><ellipse cx="309" cy="181" rx="8" ry="10"/>
                    </g>
                    <path stroke-width="6" d="M526 280l8 22M328 527l10 22M206 266l8 20"/>
                    <ellipse cx="366" cy="353" rx="156" ry="168" fill="#aaa"/>
                    <ellipse cx="372" cy="354" rx="143" ry="152" fill="url(#metal)"/>
                    <ellipse cx="390" cy="357" rx="126" ry="130" fill="#777"/>
                    <ellipse cx="395" cy="357" rx="122" ry="128" fill="url(#capg)"/>
                    <ellipse cx="400" cy="359" rx="101" ry="108" fill="#f5f5f5"/>
                    <path fill="#aaa" d="M352 316l-22 0a19 22 0 0 0 4 43l24 4z"/>
                    <text x="344" y="393" class="brand" transform="rotate(-18 344 393)">Autonics</text>
                    <circle cx="357" cy="340" r="21" fill="#fff"/>
                </g>

                <!-- lower controls and wing nut -->
                <g transform="translate(780 780) scale(.3333)">
                    <ellipse cx="624" cy="112" rx="59" ry="63" fill="#303030" stroke="#000" stroke-width="5"/>
                    <path d="M149 473l118-46 18 58-117 45zM303 412l118-46 18 58-117 45zM459 352l117-45 18 58-117 46zM613 292l118-45 17 58-116 46z"/>
                    <path d="M505 362l40-10M660 302l36-8M325 425l95-36M325 415l95-36M345 440l60-20" stroke="#777" stroke-width="4" stroke-dasharray="2 6"/>
                    <path d="M212 483c-12-8-12-22 2-24 14 0 16 14 8 24v8M216 494h8M345 440l6-12 8 14M380 415v16M402 418a8 8 0 1 0 4 10" fill="none" stroke="#bbb" stroke-width="2"/>
                    <use href="#sw"/><use href="#sw" x="155" y="-60"/>
                    <use href="#lamp"/><use href="#lamp" x="155" y="-60"/>
                    <g stroke="#000" stroke-width="4" fill="#8c8c8c"><path d="M535 735l-5 18 16 14h20l6-28-2-20z"/><path fill="#a3a3a3" d="M530 738c-30 10-42 40-34 54 10 10 26 6 30-6 8-20 8-34 4-48zM572 718c26 0 44 14 44 30-4 16-18 20-30 12-14-10-16-26-14-42z"/></g>
                </g>

                <!-- axes -->
                <g>
                    <path d="M400 1006L360 1021" stroke="#d25a5f" stroke-width="4"/><path d="M352 1025l13-10 3 9z" fill="#d25a5f"/>
                    <path d="M399 1002L387 966" stroke="#2f93c4" stroke-width="4"/><path d="M399 1002L387 966" stroke="#8fd4f4"/><path d="M383 953l9 16-8 2z" fill="#3f7fd0"/>
                    <circle cx="401" cy="1006" r="7" fill="#dcd84a"/><path d="M402 1006l12 2" stroke="#4a7a20" stroke-width="4"/><path d="M412 1003l7 5-6 4-4-4z" fill="#2f8f3f"/>
                    <text class="ax" x="340" y="1033" fill="#d6474b">X</text><text class="ax" x="377" y="951" fill="#4a74d0">Z</text><text class="ax" x="417" y="1014" fill="#36a046">Y</text>
                </g>
            </svg>

            <div class="float">
                <i class="grip"></i>
                <div><button aria-label="Эскиз"><svg class="i"><use href="#sketch"/></svg></button><button aria-label="Сдвиг"><svg class="i"><use href="#sk2"/></svg></button></div>
                <div><button aria-label="Масштаб"><svg class="i"><use href="#zoomw"/></svg></button><button class="dd" aria-label="Варианты масштаба"><svg class="i"><use href="#caret"/></svg></button><button aria-label="Нормально к"><svg class="i"><use href="#norm"/></svg></button><button aria-label="Ориентация"><svg class="i"><use href="#csys"/></svg></button><button class="dd" aria-label="Варианты ориентации"><svg class="i"><use href="#caret"/></svg></button></div>
                <div><button class="active" aria-label="Полутоновое"><svg class="i"><use href="#cubef"/></svg></button><button aria-label="Каркас"><svg class="i"><use href="#cubew"/></svg></button><button class="dd" aria-label="Варианты каркаса"><svg class="i"><use href="#caret"/></svg></button></div>
                <div><button aria-label="Скрыть"><svg class="i"><use href="#eyeoff"/></svg></button><button class="dd" aria-label="Варианты скрытия"><svg class="i"><use href="#caret"/></svg></button><button aria-label="Скрыть все"><svg class="i"><use href="#eyebox"/></svg></button><button class="dd" aria-label="Варианты показа"><svg class="i"><use href="#caret"/></svg></button></div>
                <div><button class="active" aria-label="Привязки"><svg class="i"><use href="#pts"/></svg></button><button aria-label="Размеры"><svg class="i"><use href="#dims"/></svg></button><button class="active" aria-label="Тела"><svg class="i"><use href="#bodies"/></svg></button><button aria-label="Сечение"><svg class="i"><use href="#sect2"/></svg></button></div>
                <div><button class="active" aria-label="Фильтр"><svg class="i"><use href="#funnel"/></svg></button><button class="dd active" aria-label="Варианты фильтра"><svg class="i"><use href="#caret"/></svg></button></div>
                <div><button aria-label="Измерение"><svg class="i"><use href="#crane"/></svg></button><button aria-label="Пипетка" disabled><svg class="i"><use href="#pick"/></svg></button></div>
            </div>
        </div>
    </main>
</body>
</html>
```
FILE: styles.css
```css
body, html {
    margin: 0;
    padding: 0;
    height: 100%;
    overflow: hidden;
}
body {
    display: flex;
    flex-direction: column;
    font-family: 'Noto Sans', 'Open Sans', sans-serif;
    font-size: 11px;
    color: #2a2a2a;
    background: #ccc;
}
button {
    display: flex;
    align-items: center;
    justify-content: center;
    margin: 0;
    padding: 0;
    border: none;
    background: none;
    font: inherit;
    color: inherit;
}
button:disabled {
    color: #c8c8c8;
}
input {
    flex: 1;
    min-width: 0;
    padding: 0;
    border: none;
    outline: none;
    background: none;
    font: inherit;
    font-size: 12px;
}
input::placeholder {
    color: #a9a9a9;
}
.defs {
    position: absolute;
    width: 0;
    height: 0;
}
.i {
    flex: none;
    width: 18px;
    height: 18px;
    overflow: visible;
    fill: none;
    stroke: currentColor;
    stroke-width: 1.3;
}
.f {
    fill: currentColor;
    stroke: none;
}
.active {
    background: #4a4a4a;
    color: #fff;
}

/* menu bar */
.menubar {
    display: flex;
    align-items: center;
    height: 25px;
    border-bottom: 1px solid #6a6a6a;
    background: #e4e4e4;
    padding-right: 7px;
}
.logo {
    width: 20px;
    height: 20px;
    margin: 0 9px 0 3px;
}
.menubar nav {
    display: flex;
    gap: 14px;
    flex: 1;
}
.menubar a {
    color: #444;
    text-decoration: none;
}
.winbtns {
    display: flex;
    gap: 8px;
    margin-right: 9px;
}
.cmdsearch {
    display: flex;
    align-items: center;
    gap: 2px;
    width: 184px;
    height: 20px;
    padding-left: 4px;
    border: 1px solid #aaa;
    background: #fff;
    color: #999;
}
.wincontrols {
    display: flex;
    gap: 13px;
    margin-left: 12px;
}

/* document tabs */
.tabs {
    display: flex;
    height: 20px;
    border-bottom: 6px solid #6a6a6a;
    background: #b2b2b2;
}
.home {
    gap: 5px;
    width: 47px;
    background: #c4c4c4;
}
.home .i + .i {
    width: 16px;
}
.tab {
    display: flex;
    align-items: center;
    gap: 3px;
    padding: 0 2px 0 5px;
    background: #6a6a6a;
    color: #fff;
}
.tab span {
    width: 120px;
    white-space: nowrap;
}

/* ribbon */
.ribbon {
    display: flex;
    height: 92px;
    border-bottom: 1px solid #6a6a6a;
    background: #f1f1f1;
}
.group {
    display: flex;
    flex-direction: column;
    box-sizing: border-box;
    width: 121px;
    border-right: 1px solid #aaa;
}
.wide {
    width: 241px;
}
.c2 {
    width: 53px;
}
.c3 {
    width: 79px;
}
.rest {
    flex: 1;
    border: none;
    justify-content: flex-end;
}
.cmds {
    display: grid;
    grid-template-rows: repeat(3, 25px);
    grid-auto-columns: 120px;
    grid-auto-flow: column;
}
.two .cmd:nth-child(3) {
    grid-area: 1 / 2;
}
.two .cmd:nth-child(4) {
    grid-area: 2 / 2;
}
.cmd {
    justify-content: flex-start;
    gap: 4px;
    padding-left: 4px;
    line-height: 11px;
    text-align: left;
    white-space: nowrap;
}
.small {
    display: grid;
    grid-template-columns: repeat(auto-fill, 26px);
    grid-template-rows: repeat(3, 25px);
}
.group footer {
    display: flex;
    align-items: center;
    height: 17px;
    background: #e4e4e4;
    font-size: 10px;
    white-space: nowrap;
}
.group footer span {
    flex: 1;
    text-align: center;
}
.modes footer {
    justify-content: center;
}
.grip {
    flex: none;
    width: 5px;
    height: 10px;
    margin-right: 2px;
    background: radial-gradient(circle at 1px 1px, #555 1px, transparent 1px) 0 0 / 3px 3px;
}

/* work area */
main {
    display: flex;
    flex: 1;
    min-height: 0;
}
.rail {
    width: 26px;
}
.rail button {
    width: 26px;
    height: 25px;
    background: #f1f1f1;
}
.rail .active {
    background: #4a4a4a;
}
.rail .fx {
    font-size: 16px;
    font-style: italic;
}
.fx sub {
    font-size: 12px;
    font-style: normal;
}
.panel {
    display: flex;
    flex-direction: column;
    width: 299px;
    border-left: 1px solid #6a6a6a;
    border-right: 1px solid #6a6a6a;
    background: #f1f1f1;
}
.title {
    display: flex;
    align-items: center;
    justify-content: space-between;
    height: 16px;
    padding-left: 3px;
    border-bottom: 1px solid #6a6a6a;
    background: #ccc;
}
.title .i {
    height: 17px;
}
.treebar {
    display: flex;
    height: 25px;
    border-bottom: 1px solid #000;
}
.treebar button, .bottom button, .find button {
    width: 26px;
}
.treebar .split {
    width: 28px;
    margin-left: 1px;
    border-left: 1px solid #6a6a6a;
}
.find {
    display: flex;
    height: 25px;
    border-bottom: 1px solid #444;
}
.find label {
    display: flex;
    flex: 1;
    align-items: center;
    gap: 1px;
    padding-left: 7px;
    background: #fff;
    color: #999;
}
.treewrap {
    position: relative;
    flex: 1;
    min-height: 0;
    margin-bottom: 7px;
    overflow: hidden;
}
.list {
    margin: 0;
    padding: 0;
    list-style: none;
}
.list li {
    display: grid;
    grid-template-columns: 26px 26px 1fr;
    height: 26px;
}
.list li > button, .list li > span {
    border-bottom: 1px solid #b8b8b8;
    background: #e4e4e4;
}
.list li > div {
    display: flex;
    align-items: center;
    padding-left: 33px;
    border-bottom: 1px solid #dedede;
    white-space: nowrap;
    overflow: hidden;
}
.list .arr {
    width: 11px;
    color: #222;
}
.list .pin {
    width: 14px;
    margin-left: 1px;
}
.list .off > div {
    color: #8a8a8a;
}
.list .parent > div {
    padding-left: 23px;
}
.list .current > div {
    box-shadow: 0 -1px #4fb8c9;
    border-bottom-color: #4fb8c9;
    overflow: visible;
}
.thumb {
    position: absolute;
    top: 387px;
    right: 0;
    width: 1px;
    height: 156px;
    background: #333;
}
.bottom {
    display: flex;
    height: 23px;
    border-top: 2px solid #aaa;
    border-bottom: 2px solid #999;
}
.empty {
    height: 203px;
}

/* 3D view */
.view {
    position: relative;
    flex: 1;
    min-width: 0;
    overflow: hidden;
    background: linear-gradient(#dedede, #c6c6ca 45%, #a8a8b1);
}
.scene {
    display: block;
    width: 100%;
    height: 100%;
}
.brand {
    font: bold 34px 'Liberation Sans', sans-serif;
    fill: #222;
    stroke: #b98a1c;
    stroke-width: 1px;
}
.ax {
    font: 14px 'Liberation Mono', monospace;
}
.float {
    position: absolute;
    top: -1px;
    left: 279px;
    display: flex;
    height: 25px;
    border: 1px solid #6a6a6a;
    background: #f1f1f1;
}
.float .grip {
    width: 11px;
    height: 5px;
    margin: 4px 2px 0 3px;
}
.float > div {
    display: flex;
    align-items: center;
    padding: 0 1px;
    border-left: 1px solid #6a6a6a;
}
.float button {
    width: 26px;
    height: 25px;
}
.float .dd {
    width: 22px;
}
```
